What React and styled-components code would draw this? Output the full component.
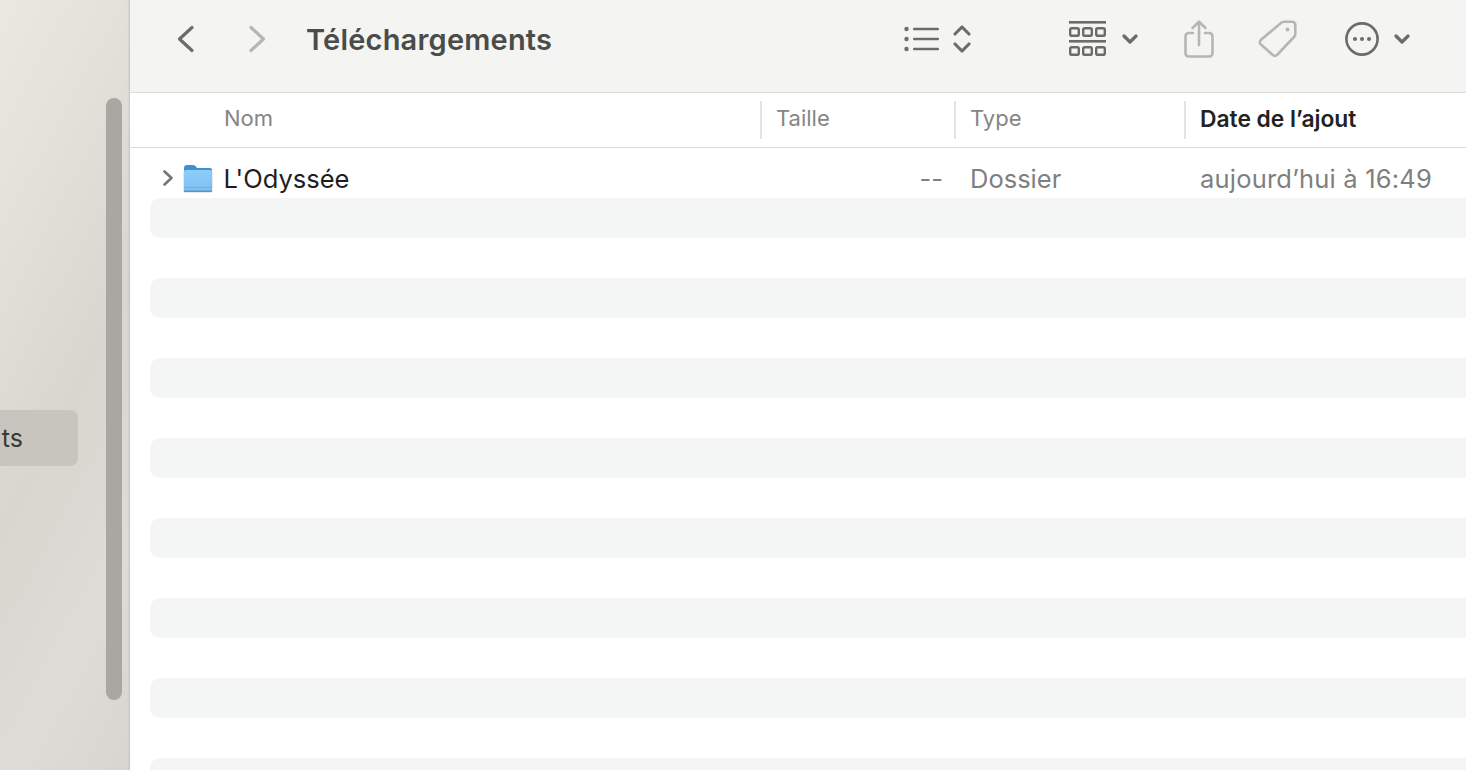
import styled, { createGlobalStyle } from 'styled-components'

const GlobalStyle = createGlobalStyle`
  html, body {
    margin: 0;
    height: 100%;
    overflow: hidden;
    font-family: Inter, "Liberation Sans", sans-serif;
  }
  #root {
    height: 100%;
  }
`

const COLUMNS = [
  { label: 'Nom', borderless: true },
  { label: 'Taille' },
  { label: 'Type' },
  { label: 'Date de l’ajout', active: true }
]

const STRIPES = [1, 2, 3, 4, 5, 6, 7, 8, 9, 10, 11, 12, 13, 14, 15, 16]

function Chevron ({ dir, color = '#6b6b69', width, height, gap, sw = 3.2 }) {
  const d = {
    left: 'M16 2.5 L3.5 14 L16 25.5',
    right: 'M3 2.5 L15.5 14 L3 25.5'
  }[dir]
  return (
    <ToolIcon $gap={gap} width={width} height={height} viewBox='0 0 19 28' fill='none' stroke={color} strokeWidth={sw} strokeLinecap='round' strokeLinejoin='round'>
      <path d={d} />
    </ToolIcon>
  )
}

function SmallDown ({ gap }) {
  return (
    <ToolIcon $gap={gap} width={16} height={10} viewBox='0 0 16 10' fill='none' stroke='#6b6b69' strokeWidth={3.2} strokeLinecap='round' strokeLinejoin='round'>
      <path d='M2 2 L8 8 L14 2' />
    </ToolIcon>
  )
}

function ListIcon ({ gap }) {
  return (
    <ToolIcon $gap={gap} width={35} height={26} viewBox='0 0 35 26'>
      <g fill='#6b6b69'>
        <circle cx='2.5' cy='3' r='2.2' />
        <circle cx='2.5' cy='13' r='2.2' />
        <circle cx='2.5' cy='23' r='2.2' />
        <rect x='9' y='1.7' width='26' height='2.6' rx='1.3' />
        <rect x='9' y='11.7' width='26' height='2.6' rx='1.3' />
        <rect x='9' y='21.7' width='26' height='2.6' rx='1.3' />
      </g>
    </ToolIcon>
  )
}

function SortIcon ({ gap }) {
  return (
    <ToolIcon $gap={gap} width={18} height={30} viewBox='0 0 18 30' fill='none' stroke='#6b6b69' strokeWidth={3.1} strokeLinecap='round' strokeLinejoin='round'>
      <path d='M2 10 L9 3 L16 10' />
      <path d='M2 20 L9 27 L16 20' />
    </ToolIcon>
  )
}

function GalleryIcon ({ gap }) {
  const boxes = [0, 13, 26]
  return (
    <ToolIcon $gap={gap} width={37} height={36} viewBox='0 0 37 36'>
      <rect x='0' y='0' width='37' height='2.6' fill='#6b6b69' />
      <rect x='0' y='19' width='37' height='2.6' fill='#6b6b69' />
      <g fill='none' stroke='#6b6b69' strokeWidth='2.4'>
        {boxes.map(x => <rect key={x} x={x + 1.2} y='7.2' width='8.6' height='7.6' rx='1.6' />)}
        {boxes.map(x => <rect key={x} x={x + 1.2} y='26.2' width='8.6' height='7.6' rx='1.6' />)}
      </g>
    </ToolIcon>
  )
}

function ShareIcon ({ gap }) {
  return (
    <ToolIcon $gap={gap} width={30} height={38} viewBox='0 0 30 38' fill='none' stroke='#b6b6b4' strokeWidth={2.6} strokeLinecap='round' strokeLinejoin='round'>
      <path d='M9 13 H5 Q1.5 13 1.5 16.5 V33 Q1.5 36.5 5 36.5 H25 Q28.5 36.5 28.5 33 V16.5 Q28.5 13 25 13 H21' />
      <path d='M15 25 V2' />
      <path d='M8.5 8 L15 1.8 L21.5 8' />
    </ToolIcon>
  )
}

function TagIcon ({ gap }) {
  return (
    <ToolIcon $gap={gap} width={39} height={38} viewBox='0 0 39 38' fill='none' stroke='#b6b6b4' strokeWidth={2.6} strokeLinejoin='round'>
      <path d='M23 3 Q24.3 1.7 26 1.7 L34 1.7 Q37.3 1.7 37.3 5 L37.3 14 Q37.3 15.6 36 17 L19.5 34.5 Q17 37 14.5 34.8 L3 24.5 Q0.6 22.2 3 19.8 Z' />
      <circle cx='29.5' cy='9.5' r='2' fill='#b6b6b4' stroke='none' />
    </ToolIcon>
  )
}

function MoreIcon ({ gap }) {
  return (
    <ToolIcon $gap={gap} width={34} height={34} viewBox='0 0 34 34'>
      <circle cx='17' cy='17' r='15.6' fill='none' stroke='#6b6b69' strokeWidth='2.6' />
      <g fill='#6b6b69'>
        <circle cx='10' cy='17' r='2' />
        <circle cx='17' cy='17' r='2' />
        <circle cx='24' cy='17' r='2' />
      </g>
    </ToolIcon>
  )
}

function FolderIcon () {
  return (
    <svg width='30' height='29' viewBox='0 0 30 29'>
      <defs>
        <linearGradient id='folderFront' x1='0' y1='0' x2='0' y2='1'>
          <stop offset='0' stopColor='#8fcdf9' />
          <stop offset='1' stopColor='#7dbff2' />
        </linearGradient>
      </defs>
      <path d='M1 4 Q1 1 4 1 H10 Q12 1 13 2.5 L14 4 H27 Q29 4 29 6 V12 H1 Z' fill='#3f8ed8' />
      <rect x='0.5' y='6.5' width='29' height='22' rx='1.8' fill='#9a9a9a' opacity='0.45' />
      <rect x='1' y='6' width='28' height='22' rx='1.6' fill='url(#folderFront)' />
      <rect x='1' y='23' width='28' height='1' fill='#6fb0e0' />
      <rect x='1' y='26.4' width='28' height='1.6' rx='0.7' fill='#5d93c0' />
    </svg>
  )
}

export default function App () {
  return (
    <Window>
      <GlobalStyle />
      <Sidebar>
        <SidebarItem>ts</SidebarItem>
        <Scrollbar />
      </Sidebar>
      <Main>
        <Toolbar>
          <Chevron dir='left' width={19} height={28} />
          <Chevron dir='right' width={19} height={28} gap={53} color='#b6b6b4' />
          <Title>Téléchargements</Title>
          <ListIcon gap={351} />
          <SortIcon gap={14} />
          <GalleryIcon gap={98} />
          <SmallDown gap={16} />
          <ShareIcon gap={46} />
          <TagIcon gap={44} />
          <MoreIcon gap={48} />
          <SmallDown gap={15} />
        </Toolbar>
        <ColumnHeader>
          {COLUMNS.map(col => (
            <HeaderCell key={col.label} $borderless={col.borderless} $active={col.active}>
              {col.label}
            </HeaderCell>
          ))}
        </ColumnHeader>
        <List>
          <Row>
            <NameCell>
              <Disclosure viewBox='0 0 12 18' width='12' height='18' fill='none' stroke='#747474' strokeWidth='2.6' strokeLinecap='round' strokeLinejoin='round'>
                <path d='M2.5 2.5 L9.5 9 L2.5 15.5' />
              </Disclosure>
              <FolderIcon />
              <FileName>L'Odyssée</FileName>
            </NameCell>
            <SizeCell>--</SizeCell>
            <MutedCell>Dossier</MutedCell>
            <DateCell>aujourd’hui à 16:49</DateCell>
          </Row>
          {STRIPES.map(n => <Row key={n} $striped={n % 2 === 1} />)}
        </List>
      </Main>
    </Window>
  )
}

const Window = styled.div`
  display: flex;
  width: 100%;
  height: 100vh;
  overflow: hidden;
  background-color: #fff;
`

const Sidebar = styled.aside`
  position: relative;
  flex: 0 0 130px;
  box-sizing: border-box;
  padding-top: 410px;
  background: linear-gradient(118deg, #e9e9e1 0%, #e2dfd8 28%, #d9d5cf 52%, #dddcd6 78%, #d8d5d0 100%);
  box-shadow: inset -3px 0 2px -2px #c4c1ba;
`

const SidebarItem = styled.div`
  display: flex;
  align-items: center;
  justify-content: flex-end;
  box-sizing: border-box;
  width: 78px;
  height: 56px;
  padding-right: 55px;
  border-radius: 0 8px 8px 0;
  background-color: #c8c5be;
  color: #3a3a38;
  font-size: 25px;
`

const Scrollbar = styled.div`
  position: absolute;
  top: 98px;
  left: 106px;
  width: 16px;
  height: 602px;
  border-radius: 8px;
  background-color: #a9a7a1;
`

const Main = styled.main`
  flex: 1;
  min-width: 0;
  display: flex;
  flex-direction: column;
`

const Toolbar = styled.header`
  display: flex;
  align-items: center;
  box-sizing: border-box;
  height: 93px;
  padding: 0 0 14px 46px;
  background-color: #f4f4f2;
  border-bottom: 1px solid #dcdcda;
`

const ToolIcon = styled.svg`
  flex: none;
  margin-left: ${props => props.$gap || 0}px;
`

const Title = styled.h1`
  flex: 0 0 247px;
  min-width: 0;
  margin: 0 0 0 39px;
  color: #4b4b49;
  font-size: 29px;
  font-weight: 600;
  letter-spacing: 0.2px;
  white-space: nowrap;
`

const ColumnHeader = styled.div`
  display: grid;
  grid-template-columns: 630px 194px 230px 1fr;
  align-items: center;
  box-sizing: border-box;
  height: 55px;
  border-bottom: 1px solid #dcdcda;
`

const HeaderCell = styled.div`
  box-sizing: border-box;
  height: 38px;
  line-height: 35px;
  padding-left: ${props => (props.$borderless ? 94 : 14)}px;
  border-left: ${props => (props.$borderless ? 'none' : '2px solid #e3e3e3')};
  color: ${props => (props.$active ? '#222' : '#858585')};
  font-size: ${props => (props.$active ? 22.8 : 22)}px;
  font-weight: ${props => (props.$active ? 600 : 400)};
`

const List = styled.div`
  flex: 1;
  overflow: hidden;
  padding: 10px 0 0 20px;
`

const Row = styled.div`
  display: grid;
  grid-template-columns: 610px 195px 230px 1fr;
  align-items: center;
  height: 40px;
  border-radius: 10px 0 0 10px;
  background-color: ${props => (props.$striped ? '#f4f6f5' : 'transparent')};
`

const NameCell = styled.div`
  display: flex;
  align-items: center;
`

const Disclosure = styled.svg`
  flex: none;
  margin: 0 9px 0 12px;
`

const FileName = styled.span`
  margin-left: 10.5px;
  color: #1e1e1e;
  font-size: 25.5px;
`

const MutedCell = styled.div`
  padding-left: 15px;
  color: #7f7f7f;
  font-size: 25.5px;
  white-space: nowrap;
`

const DateCell = styled(MutedCell)`
  letter-spacing: 0.2px;
`

const SizeCell = styled.div`
  padding-right: 12px;
  color: #7f7f7f;
  font-size: 25.5px;
  text-align: right;
`
